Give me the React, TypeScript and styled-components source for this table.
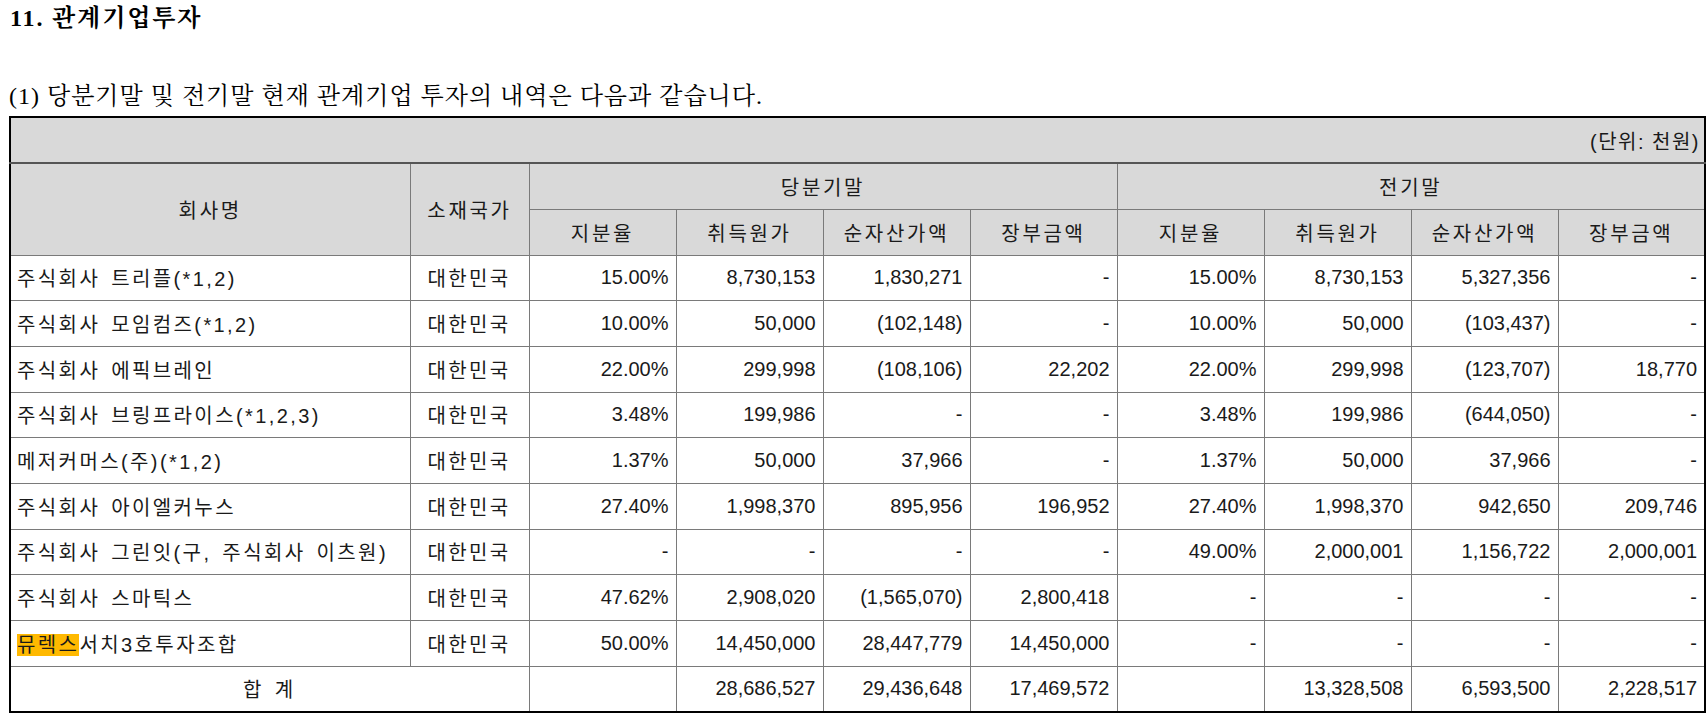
import React from "react";
import styled, { createGlobalStyle } from "styled-components";

const GlobalStyle = createGlobalStyle`
  html, body {
    margin: 0;
    padding: 0;
    background: #ffffff;
  }
  body {
    font-family: "Liberation Sans", "Noto Sans CJK KR", sans-serif;
    color: #111;
  }
`;

const Page = styled.div`
  display: flex;
  flex-direction: column;
  padding: 0 0 0 9px;
`;

const Title = styled.h1`
  margin: 0;
  height: 37px;
  line-height: 37px;
  font-family: "Liberation Serif", "Noto Serif CJK KR", "Noto Sans CJK KR", serif;
  font-size: 24px;
  font-weight: 700;
  letter-spacing: 1.85px;
  color: #000;
  padding-left: 1px;
`;

const Lead = styled.p`
  margin: 40px 0 0 0;
  height: 38px;
  line-height: 38px;
  font-family: "Liberation Serif", "Noto Serif CJK KR", "Noto Sans CJK KR", serif;
  font-size: 24px;
  font-weight: 400;
  letter-spacing: 1px;
  color: #000;
`;

const Table = styled.table`
  margin-top: 1px;
  border-collapse: collapse;
  table-layout: fixed;
  width: 1696px;
  border: 2px solid #000;
  font-family: "Liberation Sans", "Noto Sans CJK KR", sans-serif;
  font-size: 20px;
  color: #1a1a1a;
`;

const Col = styled.col<{ $w: number }>`
  width: ${(p) => p.$w}px;
`;

const Row = styled.tr<{ $h: number }>`
  height: ${(p) => p.$h}px;
`;

const HeadCell = styled.th<{ $align?: "left" | "center" | "right" }>`
  background: #d9d9d9;
  border: 1px solid #7a7a7a;
  font-weight: 400;
  text-align: ${(p) => p.$align ?? "center"};
  vertical-align: middle;
  padding: 0 6px;
  letter-spacing: 2.7px;
  white-space: nowrap;
`;

const UnitCell = styled(HeadCell)`
  border-bottom: 2px solid #555;
  padding-right: 4px;
  letter-spacing: 1.5px;
`;

const Cell = styled.td<{ $align?: "left" | "center" | "right"; $ko?: boolean }>`
  border: 1px solid #7a7a7a;
  background: #fff;
  text-align: ${(p) => p.$align ?? "right"};
  vertical-align: middle;
  padding: 0 7px 0 6px;
  letter-spacing: ${(p) => (p.$ko ? "2.4px" : "0")};
  word-spacing: ${(p) => (p.$ko ? "3px" : "0")};
  white-space: nowrap;
`;

const Mark = styled.mark`
  background: #ffb900;
  color: inherit;
  padding: 0;
`;

type DataRow = {
  name: React.ReactNode;
  values: string[];
};

const rows: DataRow[] = [
  {
    name: "주식회사 트리플(*1,2)",
    values: ["15.00%", "8,730,153", "1,830,271", "-", "15.00%", "8,730,153", "5,327,356", "-"],
  },
  {
    name: "주식회사 모임컴즈(*1,2)",
    values: ["10.00%", "50,000", "(102,148)", "-", "10.00%", "50,000", "(103,437)", "-"],
  },
  {
    name: "주식회사 에픽브레인",
    values: ["22.00%", "299,998", "(108,106)", "22,202", "22.00%", "299,998", "(123,707)", "18,770"],
  },
  {
    name: "주식회사 브링프라이스(*1,2,3)",
    values: ["3.48%", "199,986", "-", "-", "3.48%", "199,986", "(644,050)", "-"],
  },
  {
    name: "메저커머스(주)(*1,2)",
    values: ["1.37%", "50,000", "37,966", "-", "1.37%", "50,000", "37,966", "-"],
  },
  {
    name: "주식회사 아이엘커누스",
    values: ["27.40%", "1,998,370", "895,956", "196,952", "27.40%", "1,998,370", "942,650", "209,746"],
  },
  {
    name: "주식회사 그린잇(구, 주식회사 이츠원)",
    values: ["-", "-", "-", "-", "49.00%", "2,000,001", "1,156,722", "2,000,001"],
  },
  {
    name: "주식회사 스마틱스",
    values: ["47.62%", "2,908,020", "(1,565,070)", "2,800,418", "-", "-", "-", "-"],
  },
  {
    name: (
      <>
        <Mark>뮤렉스</Mark>서치3호투자조합
      </>
    ),
    values: ["50.00%", "14,450,000", "28,447,779", "14,450,000", "-", "-", "-", "-"],
  },
];

const totals = ["", "28,686,527", "29,436,648", "17,469,572", "", "13,328,508", "6,593,500", "2,228,517"];

const subHeads = ["지분율", "취득원가", "순자산가액", "장부금액"];

export default function App() {
  return (
    <>
      <GlobalStyle />
      <Page>
        <Title>11. 관계기업투자</Title>
        <Lead>(1) 당분기말 및 전기말 현재 관계기업 투자의 내역은 다음과 같습니다.</Lead>
        <Table>
          <colgroup>
            <Col $w={400} />
            <Col $w={119} />
            {Array.from({ length: 8 }).map((_, i) => (
              <Col key={i} $w={147} />
            ))}
          </colgroup>
          <thead>
            <Row $h={46}>
              <UnitCell colSpan={10} $align="right">
                (단위: 천원)
              </UnitCell>
            </Row>
            <Row $h={46}>
              <HeadCell rowSpan={2}>회사명</HeadCell>
              <HeadCell rowSpan={2}>소재국가</HeadCell>
              <HeadCell colSpan={4}>당분기말</HeadCell>
              <HeadCell colSpan={4}>전기말</HeadCell>
            </Row>
            <Row $h={46}>
              {subHeads.map((h) => (
                <HeadCell key={"a" + h}>{h}</HeadCell>
              ))}
              {subHeads.map((h) => (
                <HeadCell key={"b" + h}>{h}</HeadCell>
              ))}
            </Row>
          </thead>
          <tbody>
            {rows.map((r, i) => (
              <Row $h={45.7} key={i}>
                <Cell $align="left" $ko>
                  {r.name}
                </Cell>
                <Cell $align="center" $ko>
                  대한민국
                </Cell>
                {r.values.map((v, j) => (
                  <Cell key={j}>{v}</Cell>
                ))}
              </Row>
            ))}
            <Row $h={45.7}>
              <Cell colSpan={2} $align="center" $ko>
                합 계
              </Cell>
              {totals.map((v, j) => (
                <Cell key={j}>{v}</Cell>
              ))}
            </Row>
          </tbody>
        </Table>
      </Page>
    </>
  );
}
